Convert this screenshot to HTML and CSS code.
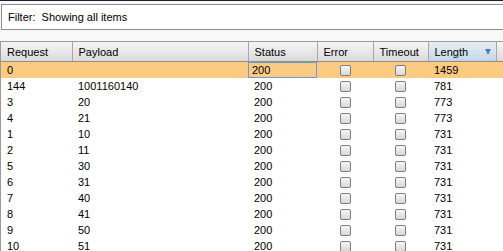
FILE: index.html
```html
<!DOCTYPE html>
<html>
<head>
    <title>Intruder Results</title>
    <link rel="stylesheet" href="styles.css">
</head>
<body>
    <div class="topline"></div>
    <div class="filter">Filter:&nbsp; Showing all items</div>

    <div class="results">
        <table>
            <colgroup>
                <col class="c-req">
                <col class="c-pay">
                <col class="c-status">
                <col class="c-err">
                <col class="c-time">
                <col class="c-len">
                <col class="c-rest">
            </colgroup>
            <thead>
                <tr>
                    <th>Request</th>
                    <th>Payload</th>
                    <th>Status</th>
                    <th>Error</th>
                    <th>Timeout</th>
                    <th class="sorted">Length<span class="arrow"></span></th>
                    <th></th>
                </tr>
            </thead>
            <tbody>
                <tr class="selected">
                    <td>0</td><td></td><td class="focus">200</td>
                    <td class="chk"><span class="box"></span></td>
                    <td class="chk"><span class="box"></span></td>
                    <td>1459</td><td></td>
                </tr>
                <tr><td>144</td><td>1001160140</td><td>200</td><td class="chk"><span class="box"></span></td><td class="chk"><span class="box"></span></td><td>781</td><td></td></tr>
                <tr><td>3</td><td>20</td><td>200</td><td class="chk"><span class="box"></span></td><td class="chk"><span class="box"></span></td><td>773</td><td></td></tr>
                <tr><td>4</td><td>21</td><td>200</td><td class="chk"><span class="box"></span></td><td class="chk"><span class="box"></span></td><td>773</td><td></td></tr>
                <tr><td>1</td><td>10</td><td>200</td><td class="chk"><span class="box"></span></td><td class="chk"><span class="box"></span></td><td>731</td><td></td></tr>
                <tr><td>2</td><td>11</td><td>200</td><td class="chk"><span class="box"></span></td><td class="chk"><span class="box"></span></td><td>731</td><td></td></tr>
                <tr><td>5</td><td>30</td><td>200</td><td class="chk"><span class="box"></span></td><td class="chk"><span class="box"></span></td><td>731</td><td></td></tr>
                <tr><td>6</td><td>31</td><td>200</td><td class="chk"><span class="box"></span></td><td class="chk"><span class="box"></span></td><td>731</td><td></td></tr>
                <tr><td>7</td><td>40</td><td>200</td><td class="chk"><span class="box"></span></td><td class="chk"><span class="box"></span></td><td>731</td><td></td></tr>
                <tr><td>8</td><td>41</td><td>200</td><td class="chk"><span class="box"></span></td><td class="chk"><span class="box"></span></td><td>731</td><td></td></tr>
                <tr><td>9</td><td>50</td><td>200</td><td class="chk"><span class="box"></span></td><td class="chk"><span class="box"></span></td><td>731</td><td></td></tr>
                <tr><td>10</td><td>51</td><td>200</td><td class="chk"><span class="box"></span></td><td class="chk"><span class="box"></span></td><td>731</td><td></td></tr>
            </tbody>
        </table>
    </div>
</body>
</html>
```

FILE: styles.css
```css
body {
    margin: 0;
    font-family: "Liberation Sans", Arial, sans-serif;
    font-size: 11px;
    color: #000;
    background-color: #f8f8f8;
    overflow: hidden;
    width: 503px;
    height: 251px;
}

.topline {
    height: 1px;
    background-color: #1d1d33;
}

.filter {
    margin: 3px 0 0 1px;
    height: 24px;
    line-height: 24px;
    padding-left: 6px;
    background-color: #fff;
    border: 1px solid #8c8c8c;
    border-right: none;
}

.results {
    margin-top: 11px;
    border-top: 1px solid #9a9a9a;
    border-left: 1px solid #9a9a9a;
    background-color: #fff;
    height: 209px;
    overflow: hidden;
}

table {
    border-collapse: collapse;
    table-layout: fixed;
    width: 502px;
}

.c-req { width: 71px; }
.c-pay { width: 176px; }
.c-status { width: 69px; }
.c-err { width: 56px; }
.c-time { width: 55px; }
.c-len { width: 68px; }
.c-rest { width: 7px; }

th {
    height: 19px;
    padding: 0 0 0 6px;
    text-align: left;
    font-weight: normal;
    background: linear-gradient(#f4f4f4, #e8e8e8 50%, #dadada);
    border-right: 1px solid #a8a8a8;
    border-bottom: 1px solid #8e8e8e;
    white-space: nowrap;
    overflow: hidden;
}

th.sorted {
    position: relative;
    background: linear-gradient(#e6eef6, #d6e3ef 50%, #c2d5e6);
}

.arrow {
    position: absolute;
    right: 5px;
    top: 7px;
    width: 0;
    height: 0;
    border-left: 3px solid transparent;
    border-right: 3px solid transparent;
    border-top: 6px solid #4f7faf;
}

td {
    height: 16px;
    padding: 0 0 0 6px;
    white-space: nowrap;
    overflow: hidden;
}

tr.selected td {
    background-color: #fdca82;
}

td.focus {
    box-shadow: inset 0 0 0 1px #6a9bd1;
    padding-left: 4px;
}

td.chk {
    padding: 0;
    text-align: center;
}

.box {
    display: inline-block;
    width: 9px;
    height: 9px;
    vertical-align: middle;
    margin-top: -1px;
    border: 1px solid #7e7e7e;
    border-radius: 2px;
    background: linear-gradient(#f6f6f6, #d8d8d8);
}
```
